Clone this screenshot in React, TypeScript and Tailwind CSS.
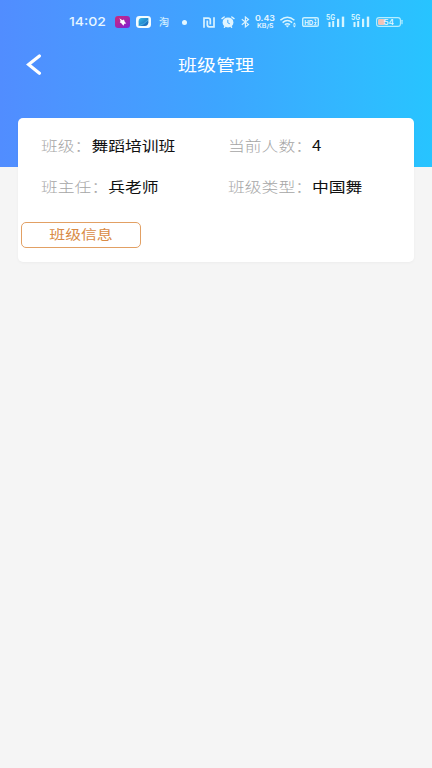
import type { ReactNode } from 'react'

function StatusText({ className, children }: { className: string; children: ReactNode }) {
  return (
    <svg className={`${className} h-4 shrink-0 overflow-visible`} fill="#e8f7ff">
      {children}
    </svg>
  )
}

function Signal() {
  return (
    <svg className="h-4 w-[19px] shrink-0 overflow-visible" viewBox="0 0 19 16" fill="#d5f5ff">
      <text x="0" y="6.2" fontSize="7" fontWeight="700" textLength="9" lengthAdjust="spacingAndGlyphs">5G</text>
      <rect x="2.5" y="8" width="2" height="5" />
      <rect x="6.2" y="7" width="2" height="6" />
      <rect x="11" y="4.8" width="2.2" height="8.2" />
      <rect x="15.8" y="2.6" width="2.4" height="10.4" />
    </svg>
  )
}

function StatusBar() {
  return (
    <div className="flex h-11 items-center pl-[69px] font-['Inter',sans-serif]">
      <StatusText className="w-[37px]">
        <text x="0" y="12.4" fontSize="12" fontWeight="500" textLength="37" lengthAdjust="spacingAndGlyphs">14:02</text>
      </StatusText>

      <svg className="ml-[9px] h-3 w-[15px] shrink-0" viewBox="0 0 15 12">
        <defs>
          <linearGradient id="bird" x1="0" y1="0" x2="1" y2="1">
            <stop offset="0" stopColor="#cf2878" />
            <stop offset="1" stopColor="#7d22d8" />
          </linearGradient>
        </defs>
        <rect width="15" height="12" rx="3" fill="url(#bird)" />
        <path d="M4.4 2.2L7.4 4.2 9 3.4 9.6 5.6 11.2 7.4 9.4 7.8 8.4 9.8 6.6 7.6 4.8 6.2 5.6 5z" fill="#fff" />
      </svg>

      <svg className="ml-1.5 h-3 w-[15px] shrink-0" viewBox="0 0 15 12">
        <defs>
          <linearGradient id="leaf" x1="0" y1="0" x2="1" y2="1">
            <stop offset="0" stopColor="#39bdec" />
            <stop offset="1" stopColor="#125eb5" />
          </linearGradient>
        </defs>
        <rect width="15" height="12" rx="3.4" fill="#f3fcff" />
        <path d="M5.4 2h7v4.3Q12.2 9.8 8.7 10H2.6V5.2Q2.8 2.2 5.4 2z" fill="url(#leaf)" />
        <path d="M3 9.7Q8 8.6 12 4" stroke="#5cc8f2" strokeWidth=".6" fill="none" />
      </svg>

      <span className="ml-2 w-[11px] shrink-0 font-['Noto_Sans_CJK_SC',sans-serif] text-[10px] leading-4 font-medium text-[#d3efff]">淘</span>
      <span className="ml-3 size-[5px] shrink-0 rounded-full bg-[#e5f8ff]" />

      {/* NFC */}
      <svg className="ml-4 h-[11px] w-3 shrink-0" viewBox="0 0 12 11" fill="none" stroke="#d9f2ff" strokeWidth="1.7">
        <path d="M1 10.7V1.2H5.2Q7.3 1.2 7.3 3.2V7.6M4.3 3.4V7.8Q4.3 9.8 6.3 9.8H11V.3" />
      </svg>

      {/* alarm */}
      <svg className="ml-[6px] h-3 w-[14px] shrink-0" viewBox="0 0 14 12">
        <ellipse cx="7" cy="6.4" rx="5.4" ry="5" fill="#e0f5ff" />
        <path d="M1 2.6L3.2 1M13 2.6L10.8 1M3.4 11.2l.6-.7M10.6 11.2l-.6-.7" stroke="#e0f5ff" strokeWidth="1.4" strokeLinecap="round" />
        <path d="M6.8 3.8v3l2 1" fill="none" stroke="#3fa5ff" strokeWidth="1" />
      </svg>

      {/* bluetooth */}
      <svg className="ml-[6px] h-3 w-[9px] shrink-0" viewBox="0 0 9 12" fill="none" stroke="#d9f2ff" strokeWidth="1.2">
        <path d="M.8 3.2l6.7 5.2-3.1 2.5V1l3.1 2.5L.8 8.8" />
      </svg>

      <StatusText className="ml-[5px] w-5">
        <text x="0" y="7.4" fontSize="7.5" fontWeight="600" textLength="20" lengthAdjust="spacingAndGlyphs">0.43</text>
        <text x="2" y="13.6" fontSize="5.6" fontWeight="600" textLength="16.5" lengthAdjust="spacingAndGlyphs">KB/S</text>
      </StatusText>

      <svg className="ml-[5px] h-3 w-[17px] shrink-0" viewBox="0 0 17 12" fill="none" stroke="#d9f5ff">
        <path d="M.4 4.2Q7.3-1.8 14.4 4.2M2.6 6.6Q7.3 2.4 12.2 6.6M4.8 8.7Q7.3 6.6 10 8.7" strokeWidth="1.5" />
        <path d="M5.5 9.5h3.8L7.4 11.6z" fill="#d9f5ff" stroke="none" />
        <path d="M12.8 8.4L14.4 6.6 16 8.4zM12.8 9.6l1.6 1.8L16 9.6z" fill="#d9f5ff" stroke="none" />
      </svg>

      <svg className="ml-[5px] h-[10px] w-[17px] shrink-0" viewBox="0 0 17 10">
        <rect x=".7" y=".7" width="15.6" height="8.6" rx="1.4" fill="none" stroke="#c9f1ff" strokeWidth="1.4" />
        <text x="2.3" y="7.5" fontSize="6.8" fontWeight="700" fill="#e3f8ff" textLength="9" lengthAdjust="spacingAndGlyphs">HD</text>
        <path d="M12.4 2.2h1.3v2.2M12.3 5.5h2L12.5 7.8h2" fill="none" stroke="#e3f8ff" strokeWidth=".9" />
      </svg>

      <div className="ml-[7px] flex gap-[6px]">
        <Signal />
        <Signal />
      </div>

      <svg className="ml-[6px] h-[10px] w-[27px] shrink-0" viewBox="0 0 27 10">
        <rect x=".6" y=".6" width="23.8" height="8.8" rx="2.5" fill="none" stroke="#b7eeff" strokeWidth="1.1" />
        <rect x="2" y="2" width="7" height="6" rx="1.3" fill="#efc3b6" />
        <path d="M26 3.3v3.4" stroke="#b7eeff" strokeWidth="1.2" strokeLinecap="round" />
        <text x="7.5" y="7.7" fontSize="7.4" fontWeight="600" fill="#ddf8ff" textLength="10.5" lengthAdjust="spacingAndGlyphs">54</text>
      </svg>
    </div>
  )
}

function Field({ label, value }: { label: string; value: string }) {
  return (
    <div className="origin-left scale-x-[1.2] text-[14px] leading-[22px] whitespace-nowrap">
      <span className="font-light text-[#a6a6a6]">{label}：</span>
      <span className="text-[#111111]">{value}</span>
    </div>
  )
}

export default function App() {
  return (
    <div className="min-h-screen bg-[#f5f5f5] font-['Noto_Sans_CJK_SC',sans-serif]">
      <header className="h-[167px] bg-linear-to-r from-[#518dff] via-[#3da5ff] to-[#27c4ff]">
        <StatusBar />
        <div className="grid h-10 grid-cols-[1fr_auto_1fr] items-center">
          <button aria-label="返回" className="ml-[26px] w-4">
            <svg className="h-[21px] w-4" viewBox="0 0 16 21" fill="none" stroke="#fff" strokeWidth="3.2" strokeLinecap="round" strokeLinejoin="miter">
              <path d="M13.4 1.9L2.6 10.5l10.8 8.7" />
            </svg>
          </button>
          <h1 className="scale-x-[1.19] text-[16px] leading-6 text-white">班级管理</h1>
        </div>
      </header>

      <main className="mx-[18px] -mt-[49px] h-[144px] rounded-[5px] bg-white shadow-[0_1px_3px_rgba(0,0,0,0.04)]">
        <div className="grid grid-cols-[187px_1fr] gap-y-[19px] pt-4 pl-[23px]">
          <Field label="班级" value="舞蹈培训班" />
          <Field label="当前人数" value="4" />
          <Field label="班主任" value="兵老师" />
          <Field label="班级类型" value="中国舞" />
        </div>
        <button className="mt-[25px] ml-[3px] flex h-[26px] w-[120px] items-center justify-center rounded-[5px] border border-[#e2a064] text-[#d98b45]">
          <span className="-mt-0.5 scale-x-[1.22] text-[13px] leading-5">班级信息</span>
        </button>
      </main>
    </div>
  )
}
